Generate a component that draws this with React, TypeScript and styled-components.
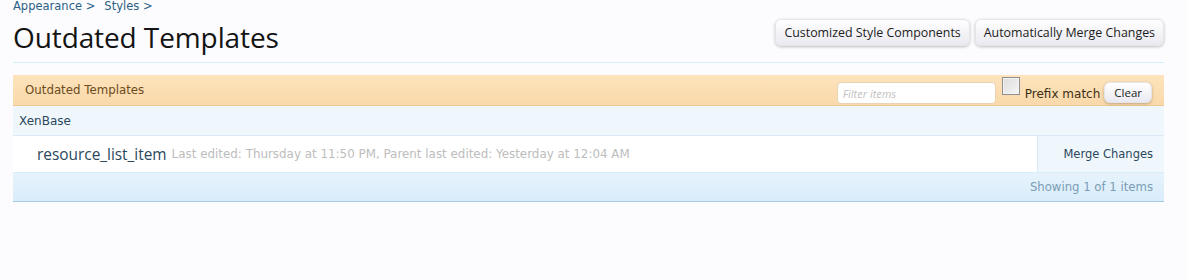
import React from "react"
import styled, { createGlobalStyle } from "styled-components"

const GlobalStyle = createGlobalStyle`
  html, body {
    margin: 0;
    padding: 0;
    background: #fcfcff;
    font-family: "DejaVu Sans", "Liberation Sans", sans-serif;
    overflow: hidden;
  }
`

const Page = styled.div`
  padding: 0 24px 0 13px;
`

const Breadcrumb = styled.nav`
  display: flex;
  gap: 9px;
  margin-top: -1px;
  height: 14px;
  font-size: 11.5px;
  line-height: 14px;
  color: #2b5f86;
`

const Crumb = styled.a`
  color: inherit;
  text-decoration: none;
`

const TitleBar = styled.div`
  display: flex;
  align-items: flex-start;
  justify-content: space-between;
  height: 49px;
  border-bottom: 1px solid #d7edfc;
`

const Title = styled.h1`
  margin: 7px 0 0;
  font-family: "Open Sans", sans-serif;
  font-size: 28px;
  font-weight: 400;
  line-height: 34px;
  letter-spacing: -0.1px;
  color: #141414;
`

const TopButtons = styled.div`
  display: flex;
  gap: 5px;
  padding-top: 6px;
`

const Button = styled.button<{ $small?: boolean }>`
  height: ${p => (p.$small ? "21px" : "27px")};
  padding: ${p => (p.$small ? "0 9px" : "0 8px")};
  border: 1px solid #e4e4ea;
  border-radius: 6px;
  background: linear-gradient(to bottom, #ffffff, #e9e9f0);
  box-shadow: 0 1px 3px rgba(0, 0, 0, 0.25);
  font-family: "Open Sans", sans-serif;
  font-size: ${p => (p.$small ? "11.5px" : "12.4px")};
  color: #1c1c1c;
  cursor: pointer;
`

const Panel = styled.div`
  margin-top: 12px;
`

const PanelHeader = styled.div`
  display: flex;
  align-items: center;
  justify-content: space-between;
  height: 30px;
  padding: 0 12px;
  background: linear-gradient(to bottom, #fee3bc, #f9d9aa);
  border-bottom: 1px solid #f1c890;
  font-size: 11.8px;
  color: #6b4b1d;
`

const FilterForm = styled.div`
  display: flex;
  align-items: flex-start;
  height: 30px;
  padding-top: 2px;
  box-sizing: border-box;
`

const FilterInput = styled.input`
  width: 159px;
  height: 22px;
  margin-top: 5px;
  box-sizing: border-box;
  border: 1px solid #e9d3b0;
  border-radius: 4px;
  background: #fff;
  padding: 0 5px;
  font-family: "Open Sans", sans-serif;
  font-size: 11px;
  &::placeholder {
    color: #bfbfbf;
    font-style: italic;
  }
`

const PrefixLabel = styled.label`
  display: flex;
  align-items: flex-start;
  margin-left: 6px;
  font-size: 12px;
  color: #3c2e17;
`

const CheckBox = styled.span`
  width: 18px;
  height: 18px;
  box-sizing: border-box;
  border: 1px solid #8f8f8f;
  background: linear-gradient(135deg, #dcdcdc, #f6f6f6);
  box-shadow: inset 0 0 0 1px #f4f4f4;
`

const PrefixText = styled.span`
  margin: 10px 4px 0 5px;
`

const ClearSlot = styled.div`
  padding-top: 5px;
`

const GroupRow = styled.div`
  height: 29px;
  display: flex;
  align-items: center;
  padding-left: 6px;
  background: #f0f7fc;
  border-bottom: 1px solid #dae9f5;
  font-size: 12px;
  color: #2b485c;
`

const ItemRow = styled.div`
  display: flex;
  height: 36px;
  background: #fff;
  border-bottom: 1px solid #d7edfc;
`

const ItemMain = styled.div`
  flex: 1;
  display: flex;
  align-items: center;
  gap: 5px;
  padding-left: 24px;
`

const ItemName = styled.a`
  font-family: "Open Sans", sans-serif;
  font-size: 15.4px;
  color: #2b485c;
  text-decoration: none;
`

const ItemMeta = styled.span`
  font-size: 11.9px;
  color: #bdbdbd;
`

const ItemAction = styled.a`
  width: 127px;
  box-sizing: border-box;
  display: flex;
  align-items: center;
  justify-content: flex-end;
  padding-right: 11px;
  background: #f0f7fc;
  border-left: 1px solid #dae9f5;
  font-size: 11.5px;
  color: #2b485c;
  text-decoration: none;
`

const PanelFooter = styled.div`
  height: 28px;
  display: flex;
  align-items: center;
  justify-content: flex-end;
  padding-right: 11px;
  background: linear-gradient(to bottom, #e6f3fc, #d9ecfa);
  border-bottom: 1px solid #a5cae4;
  font-size: 11.7px;
  color: #7b9db6;
`

export default function App() {
  return (
    <>
      <GlobalStyle />
      <Page>
        <Breadcrumb>
          <Crumb href="#">Appearance &gt;</Crumb>
          <Crumb href="#">Styles &gt;</Crumb>
        </Breadcrumb>
        <TitleBar>
          <Title>Outdated Templates</Title>
          <TopButtons>
            <Button>Customized Style Components</Button>
            <Button>Automatically Merge Changes</Button>
          </TopButtons>
        </TitleBar>
        <Panel>
          <PanelHeader>
            <span>Outdated Templates</span>
            <FilterForm>
              <FilterInput placeholder="Filter items" />
              <PrefixLabel>
                <CheckBox />
                <PrefixText>Prefix match</PrefixText>
              </PrefixLabel>
              <ClearSlot>
                <Button $small>Clear</Button>
              </ClearSlot>
            </FilterForm>
          </PanelHeader>
          <GroupRow>XenBase</GroupRow>
          <ItemRow>
            <ItemMain>
              <ItemName href="#">resource_list_item</ItemName>
              <ItemMeta>
                Last edited: Thursday at 11:50 PM, Parent last edited: Yesterday at 12:04 AM
              </ItemMeta>
            </ItemMain>
            <ItemAction href="#">Merge Changes</ItemAction>
          </ItemRow>
          <PanelFooter>Showing 1 of 1 items</PanelFooter>
        </Panel>
      </Page>
    </>
  )
}
